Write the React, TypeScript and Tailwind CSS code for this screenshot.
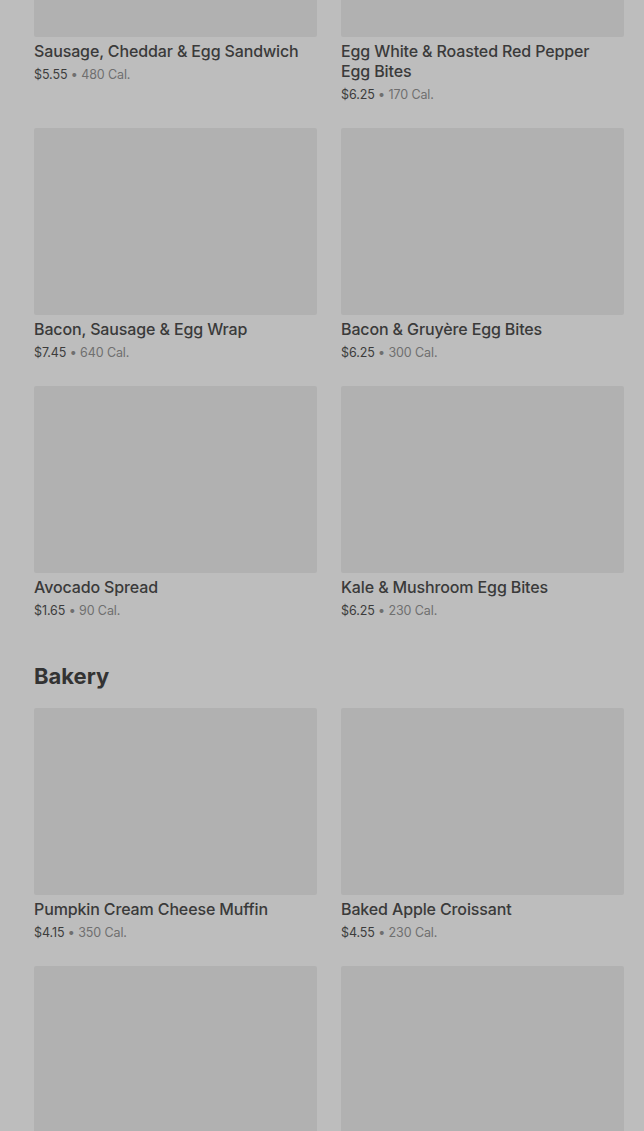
const font = { fontFamily: 'Inter, "Noto Sans", sans-serif' };

interface Item {
  name: string;
  price: string;
  cal: string;
}

const breakfast: Item[] = [
  { name: 'Sausage, Cheddar & Egg Sandwich', price: '$5.55', cal: '480 Cal.' },
  { name: 'Egg White & Roasted Red Pepper Egg Bites', price: '$6.25', cal: '170 Cal.' },
  { name: 'Bacon, Sausage & Egg Wrap', price: '$7.45', cal: '640 Cal.' },
  { name: 'Bacon & Gruyère Egg Bites', price: '$6.25', cal: '300 Cal.' },
  { name: 'Avocado Spread', price: '$1.65', cal: '90 Cal.' },
  { name: 'Kale & Mushroom Egg Bites', price: '$6.25', cal: '230 Cal.' },
];

const bakery: Item[] = [
  { name: 'Pumpkin Cream Cheese Muffin', price: '$4.15', cal: '350 Cal.' },
  { name: 'Baked Apple Croissant', price: '$4.55', cal: '230 Cal.' },
  { name: '', price: '', cal: '' },
  { name: '', price: '', cal: '' },
];

const Card = ({ item }: { item: Item }) => (
  <div>
    <div className="h-[187px] rounded-[2px] bg-[#b1b1b1]" />
    {item.name && (
      <>
        <div className="mt-1 pr-2 text-[16px] font-medium leading-[20px] tracking-[-0.13px] text-[#3a3a3a]">
          {item.name}
        </div>
        <div className="mt-[4px] mb-[-1px] text-[12.5px] leading-[20px] tracking-[-0.1px]">
          <span className="text-[#3c3c3c]">{item.price}</span>
          <span className="text-[#6f6f6f]"> • {item.cal}</span>
        </div>
      </>
    )}
  </div>
);

export default function App() {
  return (
    <div className="h-[1131px] overflow-hidden bg-[#bdbdbd]" style={font}>
      <div className="mt-[-150px] pl-[34px] pr-[20px]">
        <div className="grid grid-cols-2 gap-x-6 gap-y-6">
          {breakfast.map((it, i) => (
            <Card key={i} item={it} />
          ))}
        </div>
        <h2 className="mt-10 mb-4 text-[22px] font-bold leading-[32px] text-[#333333]">Bakery</h2>
        <div className="grid grid-cols-2 gap-x-6 gap-y-6">
          {bakery.map((it, i) => (
            <Card key={i} item={it} />
          ))}
        </div>
      </div>
    </div>
  );
}
